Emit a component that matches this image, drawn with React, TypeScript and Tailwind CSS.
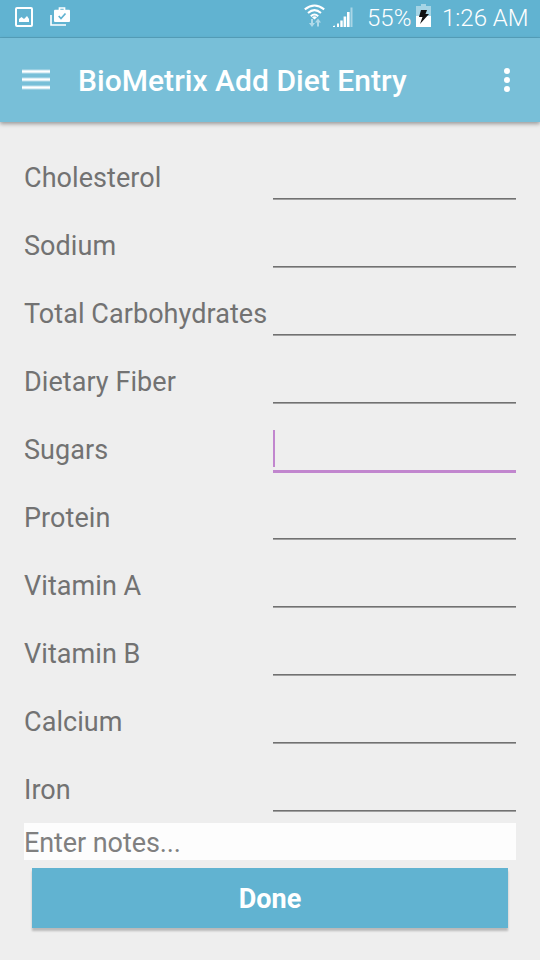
const fields = [
  { label: 'Cholesterol' },
  { label: 'Sodium' },
  { label: 'Total Carbohydrates' },
  { label: 'Dietary Fiber' },
  { label: 'Sugars', focused: true },
  { label: 'Protein' },
  { label: 'Vitamin A' },
  { label: 'Vitamin B' },
  { label: 'Calcium' },
  { label: 'Iron' },
];

function StatusBar() {
  return (
    <div className="flex h-[38px] items-start border-b border-[#57a2bd] bg-[#61b3d1] text-white">
      <svg className="ml-[15px] mt-[7px] h-5 w-[18px]" viewBox="0 0 18 20">
        <rect x="1" y="1" width="16" height="18" rx="1" fill="none" stroke="white" strokeWidth="2" />
        <path d="M4 15V12L6.5 10L9 12L12 9L14 12V15Z" fill="white" />
      </svg>
      <svg className="ml-[17px] mt-[6px] h-5 w-5" viewBox="0 0 20 20">
        <path d="M1 9V19H16" fill="none" stroke="white" strokeWidth="1.6" />
        <path d="M9.5 4V2H14.5V4" fill="none" stroke="white" strokeWidth="1.7" />
        <rect x="4" y="3.7" width="16" height="12.3" rx="1" fill="white" />
        <path d="M8.7 10L11 12.5L15.5 7.5" fill="none" stroke="#61b3d1" strokeWidth="1.7" />
      </svg>
      <svg className="ml-[234px] mt-[4px] h-6 w-[21px]" viewBox="0 0 21 24">
        <g fill="none" stroke="white" strokeWidth="2">
          <path d="M.8 5.4Q10.5-2.4 20.2 5.4" />
          <path d="M4 9Q10.5 3.3 17 9" />
          <path d="M6.8 12.2Q10.5 8.8 14.2 12.2" />
        </g>
        <path d="M8 13.2Q10.5 11.2 13 13.2L10.5 15.5Z" fill="white" />
        <g fill="#b1dae9">
          <path d="M7 15H9V19H11L8 23L5 19H7Z" />
          <path d="M13 22.5H15V18.5H17L14 14.5L11 18.5H13Z" />
        </g>
      </svg>
      <svg className="ml-[8px] mt-[7px] h-5 w-[20px]" viewBox="0 0 20 20">
        <g fill="white">
          <path d="M0 20V19L2 18.5V20Z" />
          <rect x="4" y="16.5" width="2" height="3.5" />
          <rect x="7.3" y="13.5" width="2.4" height="6.5" />
          <rect x="10.6" y="9.5" width="2.6" height="10.5" />
          <rect x="14" y="5" width="2.6" height="15" />
          <rect x="17.5" y="0.5" width="2" height="19.5" opacity=".45" />
        </g>
      </svg>
      <span className="ml-[14px] mt-[4px] w-[45px] whitespace-nowrap text-[24px] font-light leading-[28px]">55%</span>
      <svg className="ml-[4px] mt-[4px] h-[23px] w-[15px]" viewBox="0 0 15 23">
        <path d="M0 2H5V0H10V2H15V12H0Z" fill="#a5d4e5" />
        <rect y="12" width="15" height="11" fill="white" />
        <path d="M5 6H11L9.5 10H13L4 20L6.5 13H3Z" fill="#111" />
      </svg>
      <span className="ml-[11px] mt-[4px] whitespace-nowrap text-[24px] font-light leading-[28px]">1:26 AM</span>
    </div>
  );
}

function AppBar() {
  return (
    <header className="flex h-[84px] items-center bg-[#78bfd8] text-white shadow-[0_2px_4px_rgba(0,0,0,0.35)]">
      <svg className="-mt-px ml-[22px] h-[21px] w-7" viewBox="0 0 28 21">
        <path d="M0 2.5H28M0 10.5H28M0 18.5H28" stroke="white" strokeOpacity=".5" strokeWidth="4" />
        <path d="M0 2.5H28M0 10.5H28M0 18.5H28" stroke="white" strokeWidth="2" />
      </svg>
      <h1 className="ml-[28px] mt-[2px] whitespace-nowrap text-[30px] font-medium leading-9 tracking-[0.04px]">
        BioMetrix Add Diet Entry
      </h1>
      <svg className="ml-auto mr-[30px] h-6 w-[6px]" viewBox="0 0 6 24" fill="white">
        <circle cx="3" cy="3" r="3" />
        <circle cx="3" cy="12" r="3" />
        <circle cx="3" cy="21" r="3" />
      </svg>
    </header>
  );
}

function Field({ label, focused }: { label: string; focused?: boolean }) {
  return (
    <div className="flex h-[68px] justify-between">
      <label className="mt-[17px] whitespace-nowrap text-[27px] leading-9 tracking-[0.06px] text-[#727272]">{label}</label>
      {focused ? (
        <div className="mt-[15px] h-[43px] w-[243px] border-b-[3px] border-[#c186ce]">
          <div className="h-[37px] w-[2px] bg-[#c186ce]" />
        </div>
      ) : (
        <div className="mt-[18px] h-[38px] w-[243px] border-b border-[#717171] shadow-[0_1px_0_#a0a0a0]" />
      )}
    </div>
  );
}

export default function App() {
  return (
    <div className="h-[960px] w-[540px] overflow-hidden bg-[#eeeeee] font-['Roboto',sans-serif]">
      <StatusBar />
      <AppBar />
      <main className="px-6 pt-[21px]">
        {fields.map((field) => (
          <Field key={field.label} label={field.label} focused={field.focused} />
        ))}
        <div className="h-[37px] bg-[#fdfdfd] text-[27px] leading-[40px] tracking-[-0.08px] text-[#808080]">Enter notes...</div>
        <div className="px-2 pt-2">
          <button className="block h-[60px] w-full bg-[#61b3d1] pt-[2px] text-[27px] font-bold leading-9 text-white shadow-[0_3px_2px_rgba(0,0,0,0.22)]">
            Done
          </button>
        </div>
      </main>
    </div>
  );
}
